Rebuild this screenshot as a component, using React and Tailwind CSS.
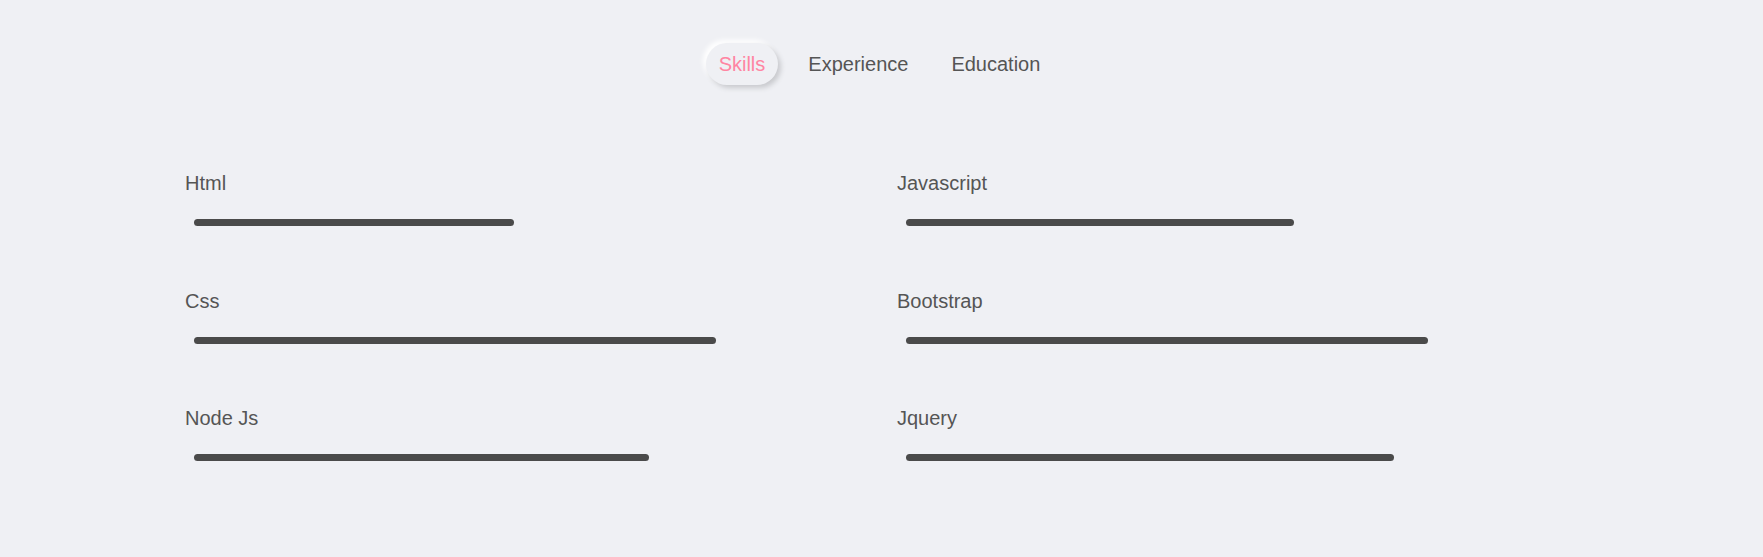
import { useState } from 'react';

const skills = [
  { name: 'Html', width: 320 },
  { name: 'Javascript', width: 388 },
  { name: 'Css', width: 522 },
  { name: 'Bootstrap', width: 522 },
  { name: 'Node Js', width: 455 },
  { name: 'Jquery', width: 488 },
];

const tabs = ['Skills', 'Experience', 'Education'];

export default function App() {
  const [active, setActive] = useState('Skills');

  return (
    <div className="min-h-[557px] w-full bg-[#eff0f4] font-['Liberation_Sans',Arial,sans-serif] text-[#555555]">
      {/* Tabs */}
      <div className="flex justify-center gap-[17px] pt-[43px] pr-[4px]">
        {tabs.map((tab) => (
          <button
            key={tab}
            onClick={() => setActive(tab)}
            className={`flex h-[42px] items-center rounded-full px-[13px] text-[20px] leading-[23px] ${
              active === tab
                ? 'text-[#ff85a2] shadow-[3px_3px_5px_#c9cace,-3px_-3px_5px_#ffffff]'
                : 'text-[#555555]'
            }`}
          >
            {tab}
          </button>
        ))}
      </div>

      {/* Skills */}
      <div className="grid grid-cols-[712px_1fr] gap-y-[63.5px] pt-[87px] pl-[185px]">
        {skills.map((s) => (
          <div key={s.name}>
            <div className="text-[20px] leading-[23px]">{s.name}</div>
            <div className="mt-[24px] pl-[9px]">
              <div className="h-[7px] rounded-full bg-[#4a4a4a]" style={{ width: s.width }} />
            </div>
          </div>
        ))}
      </div>
    </div>
  );
}
